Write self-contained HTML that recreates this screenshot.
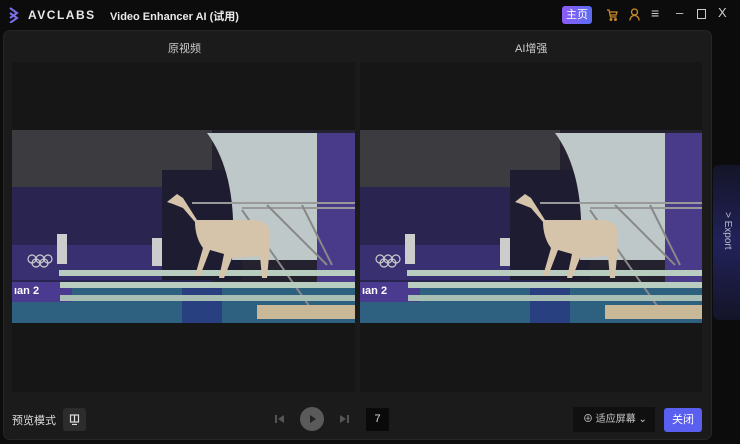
<!DOCTYPE html>
<html><head><meta charset="utf-8"><style>
*{margin:0;padding:0;box-sizing:border-box}
body{width:740px;height:444px;background:#0c0c0c;font-family:"Liberation Sans","Noto Sans CJK SC",sans-serif;color:#ddd;position:relative;overflow:hidden}
.abs{position:absolute}
.panel{left:3px;top:30px;width:709px;height:410px;background:#1b1b1b;border-radius:7px;border:1px solid #262626}
.pane{top:62px;height:330px;background:#161616}
.vid{top:130px;height:193px;overflow:hidden}
</style></head><body>
<svg class="abs" style="left:9px;top:7px" width="10" height="16" viewBox="0 0 10 16"><path d="M1 1l7 5-7 5M1 6l7 5-7 5" stroke="#7b6ee8" stroke-width="2" fill="none"/></svg>
<div class="abs" style="left:28px;top:8px;font-size:12px;font-weight:bold;letter-spacing:1.5px;color:#e8e8e8">AVCLABS</div>
<div class="abs" style="left:110px;top:8px;font-size:11px;font-weight:bold;color:#e8e8e8">Video Enhancer AI (试用)</div>
<div class="abs" style="left:562px;top:6px;width:30px;height:18px;border-radius:3px;background:linear-gradient(90deg,#8b5cf6,#5b6cf0);color:#fff;font-size:11px;text-align:center;line-height:18px">主页</div>
<svg class="abs" style="left:606px;top:9px" width="12" height="12" viewBox="0 0 12 12" fill="none" stroke="#c98a2a" stroke-width="1.3"><path d="M1 1h2l1.5 7h6M4 3h7l-1 3H4.5"/><circle cx="5" cy="10.5" r="0.8"/><circle cx="9.5" cy="10.5" r="0.8"/></svg>
<svg class="abs" style="left:629px;top:8px" width="11" height="13" viewBox="0 0 11 13" fill="none" stroke="#c98a2a" stroke-width="1.3"><circle cx="5.5" cy="4" r="3"/><path d="M1 12.5c0-3 2-5 4.5-5s4.5 2 4.5 5"/></svg>
<div class="abs" style="left:651px;top:5px;font-size:14px;color:#ccc">≡</div>
<div class="abs" style="left:676px;top:5px;font-size:13px;color:#ccc">–</div>
<div class="abs" style="left:697px;top:9px;width:9px;height:10px;border:1.5px solid #ccc"></div>
<div class="abs" style="left:718px;top:5px;font-size:13px;color:#ccc">X</div>

<div class="abs panel"></div>
<div class="abs" style="left:168px;top:40px;font-size:11px;color:#ccc">原视频</div>
<div class="abs" style="left:515px;top:40px;font-size:11px;color:#ccc">AI增强</div>
<div class="abs pane" style="left:12px;width:343px"></div>
<div class="abs pane" style="left:360px;width:342px"></div>

<svg width="0" height="0" style="position:absolute"><defs><g id="scene">
<rect width="343" height="193" fill="#24222e"/>
<rect y="0" width="200" height="57" fill="#3c3c40"/>
<rect y="57" width="200" height="100" fill="#2a2550"/>
<rect y="115" width="160" height="35" fill="#383070"/>
<rect x="150" y="40" width="80" height="110" fill="#1e1c30"/>
<path d="M195 3h110v127h-85C225 70 215 30 195 3z" fill="#bfc8c8"/>
<rect x="305" y="3" width="38" height="150" fill="#4a3a8a"/>
<rect x="0" y="152" width="343" height="41" fill="#2e6080"/>
<rect x="0" y="152" width="60" height="20" fill="#4a3a90"/>
<rect x="170" y="152" width="40" height="41" fill="#284080"/>
<path d="M180 73h163M230 78h113" stroke="#999" stroke-width="2"/>
<path d="M230 80l70 100M255 75l60 60M290 75l30 60" stroke="#888" stroke-width="2" fill="none"/>
<rect x="47" y="140" width="296" height="6" fill="#b8ccc0"/>
<rect x="48" y="152" width="295" height="6" fill="#b8ccc0"/>
<rect x="48" y="165" width="295" height="6" fill="#aabfb4"/>
<rect x="245" y="175" width="98" height="14" fill="#c8b898"/>
<path d="M155 72l10-8 6 4 14 22h55c12 0 18 6 18 16v10l-3 32h-5l-2-22-28 2-8 20h-5l5-24-14-4-10 26h-5l8-28c-6-8-8-18-8-26l-12-14-10-4z" fill="#d6c4aa"/>
<g fill="none" stroke="#ccc" stroke-width="1.2"><circle cx="20" cy="129" r="4"/><circle cx="28" cy="129" r="4"/><circle cx="36" cy="129" r="4"/><circle cx="24" cy="133" r="4"/><circle cx="32" cy="133" r="4"/></g>
<rect x="45" y="104" width="10" height="30" fill="#ccc"/><rect x="140" y="108" width="10" height="28" fill="#ccc"/>
<text x="2" y="164" fill="#fff" font-size="11" font-weight="bold" font-family="Liberation Sans">ıan 2</text>
</g></defs></svg>
<svg class="abs vid" style="left:12px" width="343" height="193"><use href="#scene"/></svg>
<svg class="abs vid" style="left:360px" width="342" height="193"><use href="#scene"/></svg>

<div class="abs" style="left:713px;top:165px;width:27px;height:155px;background:linear-gradient(180deg,#141428,#22225a 50%,#141428);border-radius:6px 0 0 6px"></div>
<div class="abs" style="left:722px;top:212px;font-size:10px;color:#bbc;writing-mode:vertical-rl">&gt; Export</div>

<div class="abs" style="left:12px;top:412px;font-size:11px;color:#ddd">预览模式</div>
<div class="abs" style="left:63px;top:408px;width:23px;height:23px;background:#2c2c2c;border-radius:3px"></div>
<svg class="abs" style="left:69px;top:414px" width="11" height="11" viewBox="0 0 11 11" fill="none" stroke="#ddd" stroke-width="1.2"><rect x="1.5" y="1" width="8" height="7"/><path d="M5.5 1v7M3 10.5h5"/></svg>
<svg class="abs" style="left:275px;top:414px" width="9" height="10"><path d="M1 1v8" stroke="#555" stroke-width="2"/><path d="M9 1L3 5l6 4z" fill="#555"/></svg>
<div class="abs" style="left:300px;top:407px;width:24px;height:24px;border-radius:50%;background:#5a5a5a"></div>
<svg class="abs" style="left:309px;top:414px" width="8" height="10"><path d="M1 1l6 4-6 4z" fill="#222"/></svg>
<svg class="abs" style="left:340px;top:414px" width="9" height="10"><path d="M8 1v8" stroke="#555" stroke-width="2"/><path d="M0 1l6 4-6 4z" fill="#555"/></svg>
<div class="abs" style="left:366px;top:408px;width:23px;height:23px;background:#0a0a0a;color:#ddd;font-size:11px;text-align:center;line-height:23px">7</div>
<div class="abs" style="left:573px;top:407px;width:82px;height:25px;background:#101010;color:#ccc;font-size:10px;line-height:25px;padding-left:10px">⊕ 适应屏幕 ⌄</div>
<div class="abs" style="left:664px;top:408px;width:38px;height:24px;background:#5b5ff0;border-radius:3px;color:#fff;font-size:11px;text-align:center;line-height:24px">关闭</div>
</body></html>
